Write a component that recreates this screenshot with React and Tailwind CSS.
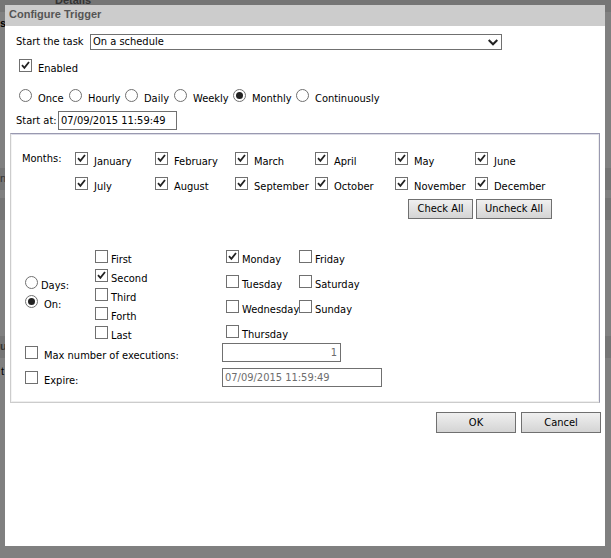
import React from "react";

const MONTHS = [
  "January", "February", "March", "April", "May", "June",
  "July", "August", "September", "October", "November", "December",
];
const FREQUENCIES = ["Once", "Hourly", "Daily", "Weekly", "Monthly", "Continuously"];
const ORDINALS = ["First", "Second", "Third", "Forth", "Last"];
const WEEKDAYS = ["Monday", "Tuesday", "Wednesday", "Thursday"];
const WEEKEND = ["Friday", "Saturday", "Sunday"];

function Check({ label, checked = false, gap = "gap-[3px]" }) {
  return (
    <label className={"flex h-[18px] items-start whitespace-nowrap leading-5 " + gap}>
      <span className="grid size-[13px] shrink-0">
        <input
          type="checkbox"
          defaultChecked={checked}
          className="peer col-start-1 row-start-1 size-[13px] appearance-none border border-[#707070] bg-white"
        />
        <svg
          viewBox="0 0 13 13"
          className="pointer-events-none invisible col-start-1 row-start-1 size-[13px] peer-checked:visible"
          aria-hidden="true"
        >
          <path d="M3 6.2 5.4 8.8 10 3" fill="none" stroke="#222" strokeWidth="1.8" />
        </svg>
      </span>
      <span>{label}</span>
    </label>
  );
}

function Radio({ label, name, checked = false, gap = "gap-[6px]" }) {
  return (
    <label className={"flex h-[18px] items-start whitespace-nowrap leading-5 " + gap}>
      <span className="grid size-[13px] shrink-0">
        <input
          type="radio"
          name={name}
          defaultChecked={checked}
          className="peer col-start-1 row-start-1 size-[13px] appearance-none rounded-full border border-[#707070] bg-white"
        />
        <span className="pointer-events-none invisible col-start-1 row-start-1 size-[7px] place-self-center rounded-full bg-[#222] peer-checked:visible" />
      </span>
      <span>{label}</span>
    </label>
  );
}

function Button({ children, size }) {
  return (
    <button
      type="button"
      className={"border border-[#707070] bg-linear-to-b from-[#f0f0f0] to-[#d4d4d4] text-center text-black " + size}
    >
      {children}
    </button>
  );
}

function Backdrop() {
  return (
    <div className="flex h-screen flex-col overflow-hidden bg-[#808080] font-['Liberation_Sans',Arial,sans-serif] text-[11px]" aria-hidden="true">
      <div className="flex h-3 items-end bg-[#757575] pb-[5px] pl-[55px] font-bold leading-[14px] text-[#333]">Details</div>
      <div className="h-[156px] pt-1 font-bold leading-[14px] text-black">s</div>
      <div className="h-[22px] bg-[#757575] leading-[20px] text-[#333]">ne</div>
      <div className="h-2" />
      <div className="h-[22px] bg-[#757575]" />
      <div className="h-[116px]" />
      <div className="h-[22px] bg-[#757575] font-bold leading-[20px] text-[#333]">ut</div>
      <div className="pt-1 pl-px leading-[18px] text-black">t</div>
    </div>
  );
}

export default function App() {
  return (
    <div className="relative h-screen">
      <Backdrop />
      <div
        role="dialog"
        aria-labelledby="dialog-title"
        className="absolute top-[5px] right-[6px] bottom-3 left-[5px] bg-white font-['DejaVu_Sans_Condensed','DejaVu_Sans',Tahoma,sans-serif] text-[11px] leading-[18px] text-black"
      >
        <h1
          id="dialog-title"
          className="h-[21px] bg-[#ccc] pl-1 font-['Liberation_Sans',Arial,sans-serif] text-[11px] font-bold leading-[19px] text-[#555]"
        >
          Configure Trigger
        </h1>

        <div className="px-[5px] pt-2">
          <div className="flex h-4 items-center pl-[6px]">
            <label htmlFor="start" className="w-[74px] whitespace-nowrap">Start the task</label>
            <div className="grid w-[412px]">
              <select
                id="start"
                className="col-start-1 row-start-1 h-4 appearance-none border border-[#707070] bg-white pl-[2px] leading-[14px]"
              >
                <option>On a schedule</option>
              </select>
              <svg
                viewBox="0 0 10 7"
                className="pointer-events-none col-start-1 row-start-1 mr-1 h-[7px] w-[10px] self-center justify-self-end"
                aria-hidden="true"
              >
                <path d="M.7 1 5 5.3 9.3 1" fill="none" stroke="#222" strokeWidth="2" />
              </svg>
            </div>
          </div>

          <div className="mt-[9px] flex pl-[9px]">
            <Check label="Enabled" checked gap="gap-[6px]" />
          </div>

          <div className="mt-3 grid grid-cols-[50px_56px_49px_59px_63px_auto] pl-[9px]">
            {FREQUENCIES.map((f) => (
              <Radio key={f} label={f} name="frequency" checked={f === "Monthly"} />
            ))}
          </div>

          <div className="mt-1 flex h-[19px] items-center pl-[6px]">
            <label htmlFor="start-at" className="w-[42px] whitespace-nowrap">Start at:</label>
            <input
              id="start-at"
              defaultValue="07/09/2015 11:59:49"
              className="h-[19px] w-[119px] border border-[#707070] bg-white px-[2px]"
            />
          </div>

          <div className="mt-[3px] h-[270px] border border-t-[#9999b0] border-r-[#9999b0] border-b-[#ccc] border-l-[#ccc]">
            <div className="h-full border border-t-[#dcdce6] border-r-[#eee] border-b-[#eee] border-l-[#f4f4f4] pt-[17px]">
              <div className="flex pl-[10px]">
                <div className="w-[53px] leading-[14px]">Months:</div>
                <div>
                  <div className="grid grid-cols-[repeat(6,80px)] gap-y-[7px]">
                    {MONTHS.map((m) => (
                      <Check key={m} label={m} checked gap="gap-[6px]" />
                    ))}
                  </div>
                  <div className="mt-1 flex justify-end gap-[3px] pr-[3px]">
                    <Button size="h-5 w-[65px]">Check All</Button>
                    <Button size="h-5 w-[76px]">Uncheck All</Button>
                  </div>
                </div>
              </div>

              <div className="mt-[31px] flex pl-[13px]">
                <div className="w-[197px]">
                  <div className="flex">
                    <div className="flex w-[70px] flex-col gap-px pt-[26px]">
                      <Radio label="Days:" name="mode" gap="gap-[3px]" />
                      <Radio label="On:" name="mode" checked />
                    </div>
                    <div className="flex flex-col gap-px">
                      {ORDINALS.map((o) => (
                        <Check key={o} label={o} checked={o === "Second"} />
                      ))}
                    </div>
                  </div>
                  <div className="mt-[2px] flex flex-col gap-[7px]">
                    <Check label="Max number of executions:" gap="gap-[6px]" />
                    <Check label="Expire:" gap="gap-[6px]" />
                  </div>
                </div>

                <div>
                  <div className="grid grid-cols-[73px_auto] pl-1">
                    <div className="flex flex-col gap-[7px]">
                      {WEEKDAYS.map((d) => (
                        <Check key={d} label={d} checked={d === "Monday"} />
                      ))}
                    </div>
                    <div className="flex flex-col gap-[7px]">
                      {WEEKEND.map((d) => (
                        <Check key={d} label={d} />
                      ))}
                    </div>
                  </div>
                  <div className="flex flex-col items-start gap-[6px]">
                    <input
                      aria-label="Max number of executions"
                      defaultValue="1"
                      className="h-[19px] w-[119px] border border-[#707070] bg-white px-[3px] text-right text-[#6d6d6d]"
                    />
                    <input
                      aria-label="Expire"
                      defaultValue="07/09/2015 11:59:49"
                      className="h-[19px] w-[160px] border border-[#707070] bg-white px-[2px] text-[#6d6d6d]"
                    />
                  </div>
                </div>
              </div>
            </div>
          </div>
        </div>

        <div className="mt-[9px] flex justify-end gap-[5px] pr-1">
          <Button size="h-[21px] w-20">OK</Button>
          <Button size="h-[21px] w-20">Cancel</Button>
        </div>
      </div>
    </div>
  );
}
